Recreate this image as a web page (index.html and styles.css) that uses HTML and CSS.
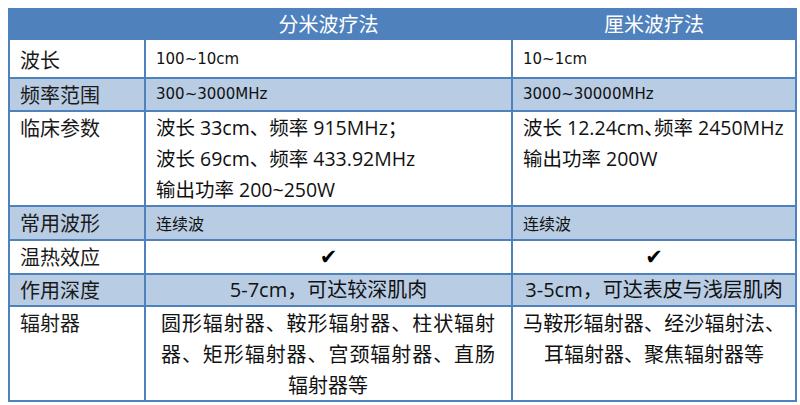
FILE: index.html
```html
<!DOCTYPE html>
<html lang="zh-CN">
<head>
<meta charset="utf-8">
<title>分米波与厘米波疗法</title>
<link rel="stylesheet" href="styles.css">
</head>
<body>
<div class="sheet">
  <div class="row head">
    <div class="cell"></div>
    <div class="cell">分米波疗法</div>
    <div class="cell">厘米波疗法</div>
  </div>
  <div class="row first">
    <div class="cell label">波长</div>
    <div class="cell small">100~10cm</div>
    <div class="cell small">10~1cm</div>
  </div>
  <div class="row alt">
    <div class="cell label">频率范围</div>
    <div class="cell small">300~3000MHz</div>
    <div class="cell small">3000~30000MHz</div>
  </div>
  <div class="row params">
    <div class="cell label">临床参数</div>
    <div class="cell body">波长 33cm、频率 915MHz；<br>波长 69cm、频率 433.92MHz<br>输出功率 200~250W</div>
    <div class="cell body">波长 12.24cm<span class="halt">、</span>频率 2450MHz<br>输出功率 200W</div>
  </div>
  <div class="row alt tall">
    <div class="cell label">常用波形</div>
    <div class="cell cjk-small">连续波</div>
    <div class="cell cjk-small">连续波</div>
  </div>
  <div class="row tall">
    <div class="cell label">温热效应</div>
    <div class="cell check">✔</div>
    <div class="cell check">✔</div>
  </div>
  <div class="row alt short">
    <div class="cell label">作用深度</div>
    <div class="cell body center">5-7cm，可达较深肌肉</div>
    <div class="cell body center">3-5cm，可达表皮与浅层肌肉</div>
  </div>
  <div class="row">
    <div class="cell label">辐射器</div>
    <div class="cell body spread wide">圆形辐射器、鞍形辐射器、柱状辐射器、矩形辐射器、宫颈辐射器、直肠辐射器等</div>
    <div class="cell body spread">马鞍形辐射器、经沙辐射法、耳辐射器、聚焦辐射器等</div>
  </div>
</div>
</body>
</html>
```

FILE: styles.css
```css
html, body {
  margin: 0;
  padding: 0;
  background: #ffffff;
}

body {
  font-family: "Open Sans", "Noto Sans CJK SC", sans-serif;
  color: #111111;
}

.sheet {
  margin: 8px 0 0 8px;
  width: 785px;
  border: 2px solid #4f81bd;
  border-top: 0;
}

.row {
  display: grid;
  grid-template-columns: 134px 367px 284px;
  border-top: 2px solid #4f81bd;
}

.row.head,
.row.first {
  border-top: 0;
}

.row.alt {
  background: #b8cce4;
}

.cell {
  padding: 0 10px;
  font-size: 20px;
  line-height: 31px;
  border-left: 2px solid #4f81bd;
}

.cell:first-child {
  border-left: 0;
}

.head {
  background: #4f81bd;
  color: #ffffff;
}

.head .cell {
  height: 32px;
  line-height: 32px;
  text-align: center;
  border-left-color: #4f81bd;
  font-family: "Noto Sans CJK SC", sans-serif;
}

.label {
  font-family: "Noto Sans CJK SC", sans-serif;
  color: #1a1a1a;
}

.first .cell {
  padding-top: 4px;
  padding-bottom: 2px;
}

.small {
  font-family: "DejaVu Sans", "Noto Sans CJK SC", sans-serif;
  font-size: 15px;
}

.cjk-small {
  font-family: "Noto Sans CJK SC", sans-serif;
  font-size: 16px;
}

.tall .cell {
  line-height: 32px;
}

.short .cell {
  line-height: 30px;
}

.body {
  font-size: 20px;
  color: #111111;
}

.params .body {
  font-size: 19.5px;
  white-space: nowrap;
}

.halt {
  font-feature-settings: "halt";
}

.center {
  text-align: center;
}

.check {
  text-align: center;
  font-family: "DejaVu Sans", sans-serif;
  font-size: 21px;
  color: #000000;
}

.spread {
  text-align: justify;
  text-align-last: center;
  font-family: "Noto Sans CJK SC", sans-serif;
}

.spread.wide {
  padding: 0 16px 0 15px;
}
```
